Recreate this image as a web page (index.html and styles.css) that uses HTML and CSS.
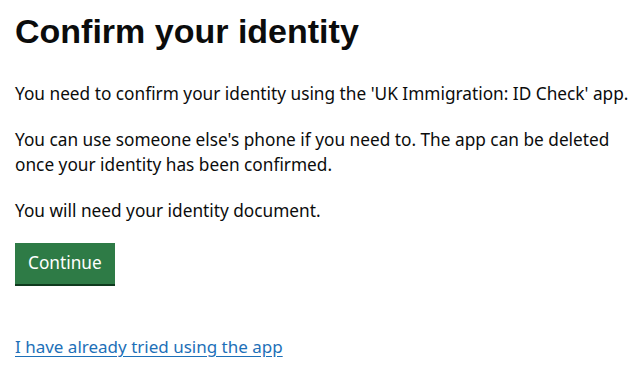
FILE: index.html
```html
<!DOCTYPE html>
<html lang="en">
<head>
<meta charset="utf-8">
<title>Confirm your identity</title>
<link rel="stylesheet" href="styles.css">
</head>
<body>
<main class="page">
  <h1 class="heading">Confirm your identity</h1>
  <p class="body">You need to confirm your identity using the 'UK Immigration: ID Check' app.</p>
  <p class="body">You can use someone else's phone if you need to. The app can be deleted once your identity has been confirmed.</p>
  <p class="body last">You will need your identity document.</p>
  <button class="button" type="button">Continue</button>
  <p class="link-row"><a class="link" href="#">I have already tried using the app</a></p>
</main>
</body>
</html>
```

FILE: styles.css
```css
html, body {
  margin: 0;
  padding: 0;
  background: #ffffff;
}
.page {
  padding: 10px 15px 0 15px;
  font-family: "Noto Sans", "Liberation Sans", Arial, sans-serif;
  color: #0b0c0c;
  max-width: 614px;
}
.heading {
  margin: 0 0 29px 0;
  font-family: "Liberation Sans", Arial, sans-serif;
  font-size: 34px;
  line-height: 42px;
  font-weight: 700;
}
.body {
  margin: 0 0 21px 0;
  font-size: 17.25px;
  line-height: 25px;
}
.body.last {
  margin-bottom: 20px;
}
.button {
  display: block;
  margin: 0;
  padding: 7px 13px 9px 13px;
  background: #2e7b46;
  color: #ffffff;
  border: 0;
  border-radius: 0;
  box-shadow: 0 2px 0 #0f3a1e;
  font-family: inherit;
  font-size: 17.25px;
  line-height: 25px;
}
.link-row {
  margin: 50px 0 0 0;
  font-size: 17px;
  line-height: 25px;
}
.link {
  color: #1d70b8;
  text-decoration: underline;
  text-underline-offset: 3px;
}
```
